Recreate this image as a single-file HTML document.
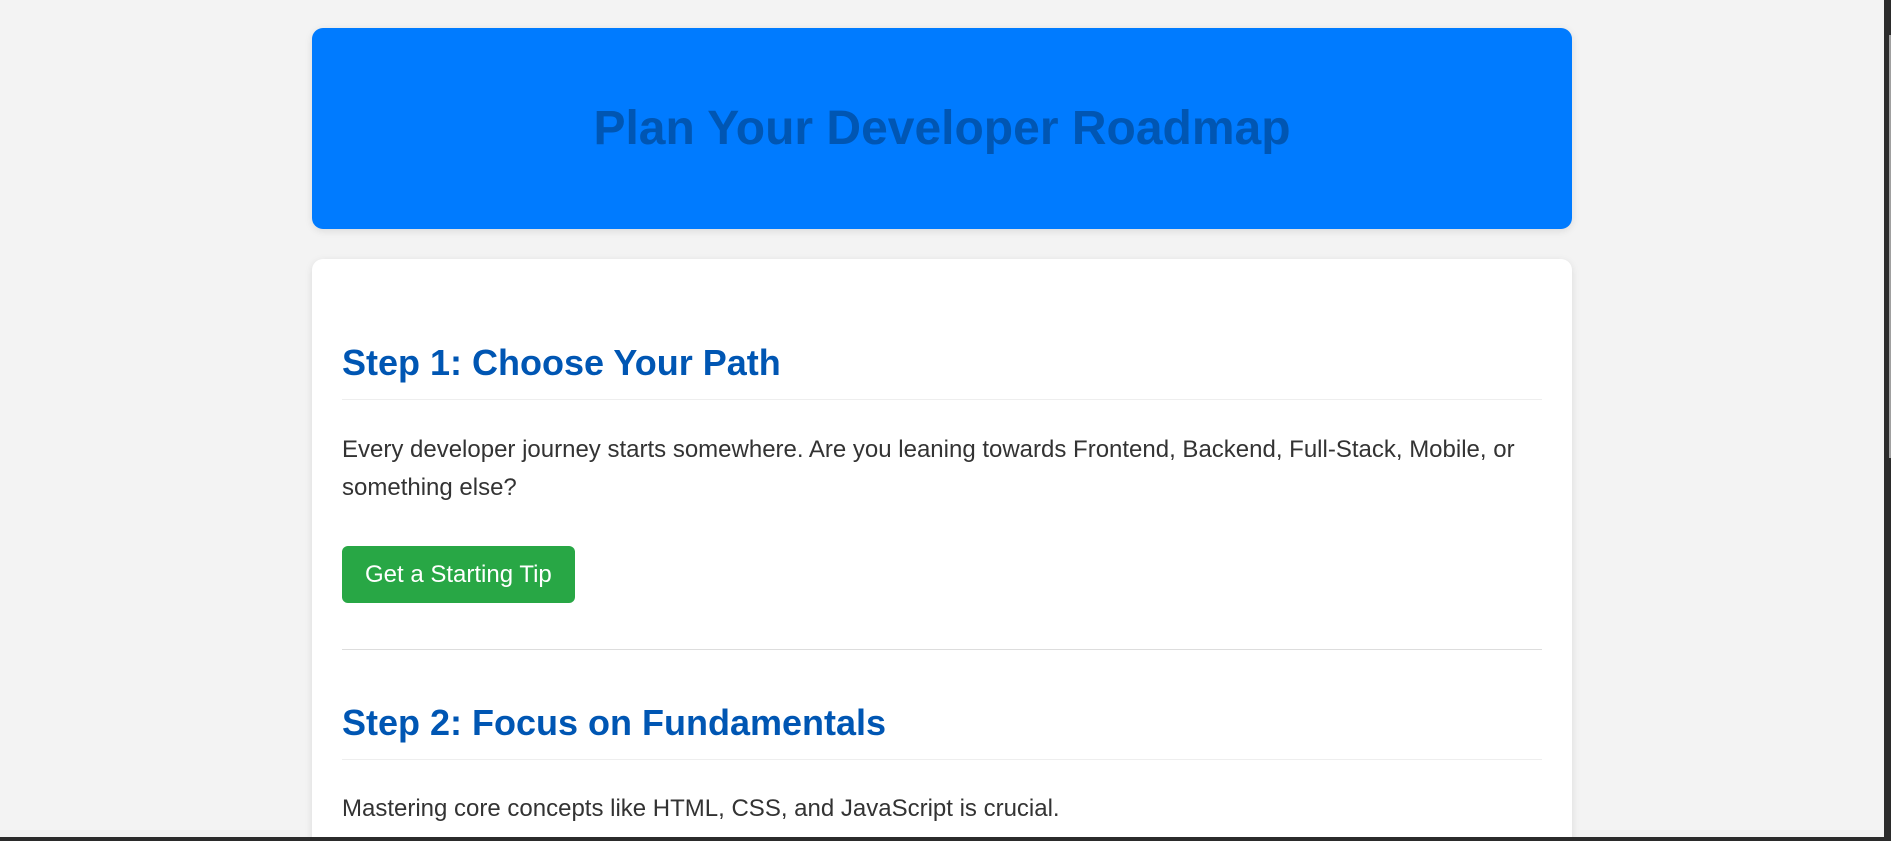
<!DOCTYPE html>
<html><head><meta charset="utf-8"><style>
*{box-sizing:border-box;margin:0;padding:0}
html,body{width:1891px;height:841px;overflow:hidden;background:#f3f3f3;font-family:"Liberation Sans",Arial,sans-serif;position:relative}
.header{position:absolute;left:312px;top:28px;width:1260px;height:201px;background:#007bff;border-radius:11px;box-shadow:0 2px 8px rgba(0,0,0,.1);text-align:center}
.header h1{position:absolute;left:0;right:0;top:73px;font-size:48px;line-height:56px;color:#0056b3;font-weight:bold}
.card{position:absolute;left:312px;top:259px;width:1260px;height:582px;overflow:hidden;background:#fff;border-radius:11px 11px 0 0;box-shadow:0 2px 8px rgba(0,0,0,.1);padding:0 30px}
h2{font-size:36px;line-height:42px;color:#0056b3;font-weight:bold;padding-bottom:15px;border-bottom:1px solid #eee}
p{font-size:24px;line-height:38.4px;color:#333}
.btn{display:inline-block;background:#28a745;color:#fff;font-size:24px;line-height:29px;padding:14px 23px;border-radius:6px;height:57px}
hr{border:0;border-top:1px solid #ddd}
.frameR{position:absolute;left:1884px;top:0;width:7px;height:841px;background:#2b2b2b}
.thumb{position:absolute;left:1889px;top:35px;width:2px;height:423px;background:#a0a0a0}
.frameB{position:absolute;left:0;top:837px;width:1891px;height:4px;background:#2b2b2b}
</style></head><body>
<div class="header"><h1>Plan Your Developer Roadmap</h1></div>
<div class="card">
<h2 style="margin-top:83px">Step 1: Choose Your Path</h2>
<p style="margin-top:31px">Every developer journey starts somewhere. Are you leaning towards Frontend, Backend, Full-Stack, Mobile, or something else?</p>
<div class="btn" style="margin-top:38px">Get a Starting Tip</div>
<hr style="margin-top:46px">
<h2 style="margin-top:52px">Step 2: Focus on Fundamentals</h2>
<p style="margin-top:30px">Mastering core concepts like HTML, CSS, and JavaScript is crucial.</p>
</div>
<div class="frameR"></div><div class="thumb"></div><div class="frameB"></div>
</body></html>
